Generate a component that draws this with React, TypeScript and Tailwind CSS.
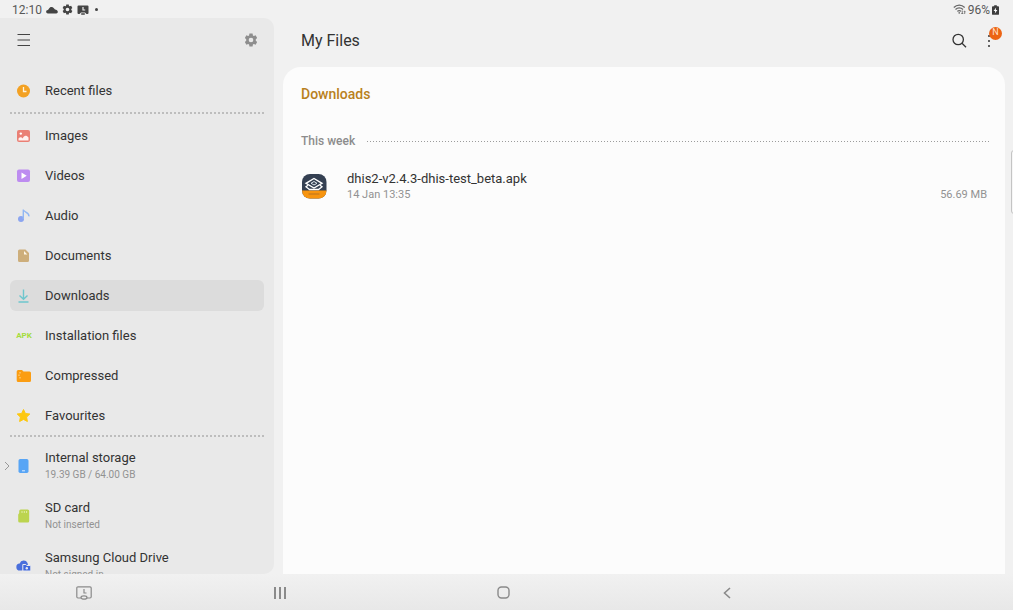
import React from "react";

const rule =
  "h-px bg-[repeating-linear-gradient(90deg,#9c9c9c_0px,#9c9c9c_1px,transparent_1px,transparent_3px)]";

const softRule =
  "h-0.5 bg-[repeating-linear-gradient(90deg,#bdbdbd_0px,#bdbdbd_2px,transparent_2px,transparent_4px)]";

function GearIcon({ className }: { className: string }) {
  return (
    <svg viewBox="0 0 24 24" className={className} fill="currentColor" aria-hidden="true">
      <path
        fillRule="evenodd"
        d="M9.3 1h5.4l.6 3.1 1.6 1 3-1.1 2.7 4.7-2.4 2.1v2.4l2.4 2.1-2.7 4.7-3-1.1-1.6 1-.6 3.1H9.3l-.6-3.1-1.6-1-3 1.1-2.7-4.7 2.4-2.1v-2.4L1.4 8.7 4.1 4l3 1.1 1.6-1L9.3 1ZM12 8a4 4 0 1 0 0 8 4 4 0 0 0 0-8Z"
      />
    </svg>
  );
}

const icons: Record<string, React.ReactNode> = {
  recent: (
    <>
      <circle cx="7.500" cy="8" r="6.500" fill="#f3a123" />
      <path d="M7.500 4V8.500H10.500" fill="none" stroke="#fff3dc" strokeWidth="1.300" />
    </>
  ),
  images: (
    <>
      <rect x="1" y="2" width="13" height="12" rx="2" fill="#ea7f74" />
      <circle cx="4.800" cy="5.600" r="1.200" fill="#fff" />
      <path d="M2.500 12.500V10.600C4 8.600 5.500 9 6.700 10.500 8 7 10.500 7 12.500 9.500v3Z" fill="#fff1ef" />
    </>
  ),
  videos: (
    <>
      <rect x="1" y="1.500" width="13" height="12.500" rx="2" fill="#bd8cf0" />
      <path d="M5.500 4.400v6.600L10.700 7.700Z" fill="#fff" />
    </>
  ),
  audio: (
    <>
      <circle cx="5" cy="11" r="3" fill="#8ca5f0" />
      <path d="M7.300 11V1.500c.3 3 6.200 2.200 5.600 6.800" fill="none" stroke="#91b7f3" strokeWidth="1.400" />
    </>
  ),
  documents: (
    <>
      <path d="M3.500 1.500h6L13 5v7.500a1.500 1.500 0 0 1-1.500 1.500h-8A1.500 1.500 0 0 1 2 12.500V3A1.500 1.500 0 0 1 3.500 1.500Z" fill="#cdae7b" />
      <path d="M8 3v3.400h3.300Z" fill="#fff8e9" />
    </>
  ),
  downloads: (
    <path d="M7.500 1.500V11M3.500 7.500 7.500 11.300 11.500 7.500M2.500 14h10" fill="none" stroke="#6dc6cd" strokeWidth="1.400" />
  ),
  compressed: (
    <>
      <path d="M2.200 2H6l1.500 1.500h6A1.500 1.500 0 0 1 15 5v7.500a1.500 1.500 0 0 1-1.500 1.500H2.200A1.500 1.500 0 0 1 .7 12.500v-9A1.500 1.500 0 0 1 2.200 2Z" fill="#fb9d12" />
      <path d="M4 4v1.500M3 6.500V8M4 9v1.500" stroke="#ffd48a" strokeWidth="1.100" />
    </>
  ),
  favourites: (
    <path d="m7.500 1.500 1.900 4 4.400.500-3.200 3.100.8 4.400-3.900-2.100-3.900 2.100.8-4.400L1.200 6l4.400-.5Z" fill="#fdc80f" stroke="#fdc80f" strokeWidth="1" strokeLinejoin="round" />
  ),
  internal: (
    <>
      <rect x="2.500" y="1" width="10" height="14" rx="1.700" fill="#58a5f5" />
      <path d="M6 12.800h3" stroke="#d9ecff" strokeWidth="1" />
    </>
  ),
  sd: (
    <>
      <path d="M4.700 1.500h7A1.500 1.500 0 0 1 13.200 3v10a1.500 1.500 0 0 1-1.500 1.500h-8A1.500 1.500 0 0 1 2.200 13V6.500L3.200 5V3A1.500 1.500 0 0 1 4.700 1.500Z" fill="#bcd44f" />
      <path d="M6 3v2M8.300 3v2M10.600 3v2" stroke="#e0eca5" strokeWidth="1" />
    </>
  ),
  cloud: (
    <>
      <path d="M4 12.500a3.500 3.500 0 0 1-.3-7A4.200 4.200 0 0 1 11.500 5l.5 2h2.500v5.500Z" fill="#4a6fdc" />
      <path d="M6.800 6.500h3l1 1h4V13h-8Z" fill="#4169dd" stroke="#e9eaf0" strokeWidth="1" />
      <circle cx="10.800" cy="10.200" r="1.200" fill="#e9eaf0" />
    </>
  ),
};

function ItemIcon({ name }: { name: string }) {
  if (name === "apk") {
    return <span aria-hidden="true" className="flex w-4 justify-center text-[8px] font-bold text-[#a4dc3c]">APK</span>;
  }
  return (
    <svg viewBox="0 0 16 16" className="size-4 shrink-0" aria-hidden="true">
      {icons[name]}
    </svg>
  );
}

const categories = [
  ["images", "Images"],
  ["videos", "Videos"],
  ["audio", "Audio"],
  ["documents", "Documents"],
  ["downloads", "Downloads"],
  ["apk", "Installation files"],
  ["compressed", "Compressed"],
  ["favourites", "Favourites"],
];

const storages = [
  ["internal", "Internal storage", "19.39 GB / 64.00 GB"],
  ["sd", "SD card", "Not inserted"],
  ["cloud", "Samsung Cloud Drive", "Not signed in"],
];

function NavItem({ icon, label, active = false }: { icon: string; label: string; active?: boolean }) {
  return (
    <a
      href="#"
      aria-current={active ? "page" : undefined}
      className={
        active
          ? "flex h-[31px] items-center gap-3 rounded-md bg-[#dcdcdc] px-1.5"
          : "flex h-[31px] items-center gap-3 rounded-md px-1.5"
      }
    >
      <ItemIcon name={icon} />
      <span className="pl-px">{label}</span>
    </a>
  );
}

function StatusBar() {
  return (
    <div className="flex h-[18px] shrink-0 items-center justify-between pt-px pl-3 pr-3.5 text-xs text-[#585858]">
      <div className="flex items-center gap-1">
        <span>12:10</span>
        <svg viewBox="0 0 12 8" className="h-2 w-3" fill="#444" aria-hidden="true">
          <path d="M2 7.500a1.800 1.800 0 0 1-.2-3.600C2.800 3.800 3 1 5.500 1c2 0 2.500 1.800 3.500 2.500 1.500.2 2.800 1 2.800 2.300 0 1-.6 1.700-1.500 1.700Z" />
        </svg>
        <GearIcon className="size-[11px] text-[#444]" />
        <svg viewBox="0 0 12 12" className="size-3" aria-hidden="true">
          <path d="M1.500 1.500h9a1 1 0 0 1 1 1V9a1 1 0 0 1-1 1H9.500L8 8.500H4L2.500 10h-1a1 1 0 0 1-1-1V2.500a1 1 0 0 1 1-1Z" fill="#444" />
          <path d="M6 3v3h2.200" fill="none" stroke="#eee" strokeWidth="1.200" />
          <rect x="4" y="9.300" width="4" height="1.500" rx=".7" fill="#444" />
        </svg>
        <span className="ml-0.5 size-[3px] rounded-full bg-[#444]" />
      </div>
      <div className="flex items-center gap-0.5">
        <svg viewBox="0 0 13 11" className="h-[11px] w-[13px]" fill="none" stroke="#666" aria-hidden="true">
          <path d="M.8 3.500C4 .3 8.500.3 11.700 3.500M2.500 5.500c2.200-2.200 5.300-2.200 7.500 0M4.300 7.400c1.200-1.100 2.700-1.100 3.900 0" strokeWidth="1.200" />
          <circle cx="6.200" cy="8.900" r=".8" fill="#666" stroke="none" />
          <path d="M9.300 6.500v3.500M8.300 9l1 1 1-1M11.700 10V7M10.900 7.800l.8-.8.8.8" strokeWidth=".8" />
        </svg>
        <span className="flex items-center">
          96%
          <svg viewBox="0 0 8 11" className="ml-0.5 h-[10px] w-[7px]" aria-hidden="true">
            <path d="M2.500 0h3v1.200H7a1 1 0 0 1 1 1V10a1 1 0 0 1-1 1H1a1 1 0 0 1-1-1V2.200a1 1 0 0 1 1-1h1.500Z" fill="#3d3d3d" />
            <path d="M4.700 2.700 1.800 6.600h1.800L3.200 9.500 6.200 5.600H4.400Z" fill="#fff" />
          </svg>
        </span>
      </div>
    </div>
  );
}

function Sidebar() {
  return (
    <aside className="w-[274px] shrink-0 overflow-hidden rounded-r-[10px] bg-[#e9e9e9] text-[13px] text-[#333]">
      <div className="flex h-11 items-center justify-between px-4">
        <button type="button" aria-label="Menu">
          <svg viewBox="0 0 16 16" className="size-4" stroke="#444" strokeWidth="1.200" aria-hidden="true">
            <path d="M1.500 2.500h12.500M1.500 8h12.500M1.500 13.500h12.500" />
          </svg>
        </button>
        <button type="button" aria-label="Settings">
          <GearIcon className="size-3.5 text-[#8e8e8e]" />
        </button>
      </div>
      <nav className="px-2.5 pt-[13px]">
        <NavItem icon="recent" label="Recent files" />
        <div className={`mt-1.5 ${softRule}`} />
        <div className="mt-1.5 flex flex-col gap-[9px]">
          {categories.map(([icon, label]) => (
            <NavItem key={icon} icon={icon} label={label} active={icon === "downloads"} />
          ))}
        </div>
        <div className={`mt-1 ${softRule}`} />
        <div className="mt-3 flex flex-col gap-[17px]">
          {storages.map(([icon, label, detail]) => (
            <a key={icon} href="#" className="relative flex items-center gap-3 px-1.5">
              {icon === "internal" && (
                <svg viewBox="0 0 6 10" className="absolute -left-1.5 h-2.5 w-1.5" fill="none" stroke="#999" aria-hidden="true">
                  <path d="m1 1 4 4-4 4" />
                </svg>
              )}
              <ItemIcon name={icon} />
              <span className="flex flex-col pl-px">
                <span className="leading-[18px]">{label}</span>
                <span className="text-[10px] leading-[15px] text-[#929292]">{detail}</span>
              </span>
            </a>
          ))}
        </div>
      </nav>
    </aside>
  );
}

function FileRow() {
  return (
    <a href="#" className="flex items-center">
      <svg viewBox="0 0 26 26" className="size-[26px] shrink-0" aria-hidden="true">
        <clipPath id="app-shape">
          <rect x="1" y="1" width="24.500" height="24.500" rx="8" />
        </clipPath>
        <g clipPath="url(#app-shape)">
          <path d="M0 0h26v26H0Z" fill="#344052" />
          <path d="M0 17.500h26V26H0Z" fill="#f7940f" />
          <path d="M13 5.500 21 10.300 13 15 5 10.300Z" fill="none" stroke="#fff" strokeWidth="1.400" />
          <path d="M13 8.500 16 10.300 13 12 10 10.300Z" fill="none" stroke="#dce4ea" strokeWidth="1" />
          <path d="m7 12.300-2 1.500 3.500 2.700h9l3.500-2.700-2-1.500" fill="none" stroke="#fff" strokeWidth="1.300" />
          <path d="M7.500 21h11" stroke="#b87320" strokeWidth="1.200" />
        </g>
      </svg>
      <span className="ml-5 flex flex-1 flex-col">
        <span className="text-[13px] leading-[18px] text-[#333]">dhis2-v2.4.3-dhis-test_beta.apk</span>
        <span className="flex justify-between text-[11px] leading-[14px] text-[#929292]">
          <span>14 Jan 13:35</span>
          <span>56.69 MB</span>
        </span>
      </span>
    </a>
  );
}

export default function App() {
  return (
    <div className="relative flex h-screen flex-col overflow-hidden bg-[#f1f1f1] font-['Roboto',sans-serif]">
      <StatusBar />
      <div className="flex min-h-0 flex-1 gap-[9px]">
        <Sidebar />
        <main className="flex min-w-0 flex-1 flex-col pr-2">
          <header className="flex h-[49px] shrink-0 items-center justify-between pb-1 pl-[18px] pr-2.5">
            <h1 className="text-base text-[#333]">My Files</h1>
            <div className="flex items-center gap-4">
              <button type="button" aria-label="Search">
                <svg viewBox="0 0 16 16" className="size-4" fill="none" stroke="#333" strokeWidth="1.300" aria-hidden="true">
                  <circle cx="7.200" cy="6.500" r="5.200" />
                  <path d="m11 10.300 4 4" />
                </svg>
              </button>
              <button type="button" aria-label="More options" className="relative flex w-3 flex-col items-center gap-[3px]">
                <span className="size-0.5 rounded-full bg-[#333]" />
                <span className="size-0.5 rounded-full bg-[#333]" />
                <span className="size-0.5 rounded-full bg-[#333]" />
                <span className="absolute -top-2 left-1.5 flex size-[13px] items-center justify-center rounded-full bg-[#ec6414] text-[9px] text-[#ffe3cf]">
                  N
                </span>
              </button>
            </div>
          </header>
          <section className="flex-1 rounded-t-[18px] bg-[#fcfcfc] px-[18px] pt-[18px]">
            <h2 className="text-sm leading-[18px] font-medium text-[#b9811c]">Downloads</h2>
            <div className="mt-[30px] flex items-center gap-3">
              <h3 className="text-xs font-medium text-[#8c8c8c]">This week</h3>
              <div className={`-mr-1 flex-1 ${rule}`} />
            </div>
            <div className="mt-[21px]">
              <FileRow />
            </div>
          </section>
        </main>
      </div>
      <footer className="grid h-9 shrink-0 grid-cols-[3fr_4fr_4fr_4fr_3fr] bg-linear-to-b from-[#f1f1f1] to-[#e8e8e8] pt-px pr-1.5 text-[#8a8a8a]">
        <button type="button" aria-label="Screen capture" className="flex items-center justify-center">
          <svg viewBox="0 0 16 14" className="h-3.5 w-4" fill="none" stroke="currentColor" strokeWidth="1.200" aria-hidden="true">
            <path d="M5 12H2A1.200 1.200 0 0 1 .8 10.800V2A1.200 1.200 0 0 1 2 .8h12A1.200 1.200 0 0 1 15.200 2v8.800A1.200 1.200 0 0 1 14 12h-3M8 3v4h2.500" />
            <ellipse cx="8" cy="11.500" rx="3" ry="1.700" />
          </svg>
        </button>
        <button type="button" aria-label="Recent apps" className="flex items-center justify-center gap-[3px]">
          <span className="h-3 w-0.5 bg-[#8a8a8a]" />
          <span className="h-3 w-0.5 bg-[#8a8a8a]" />
          <span className="h-3 w-0.5 bg-[#8a8a8a]" />
        </button>
        <button type="button" aria-label="Home" className="flex items-center justify-center">
          <svg viewBox="0 0 13 13" className="size-[13px]" fill="none" stroke="currentColor" strokeWidth="1.400" aria-hidden="true">
            <rect x="1" y="1" width="11" height="11" rx="3.500" />
          </svg>
        </button>
        <button type="button" aria-label="Back" className="flex items-center justify-center">
          <svg viewBox="0 0 8 12" className="h-3 w-2" fill="none" stroke="currentColor" strokeWidth="1.600" aria-hidden="true">
            <path d="M7 1 1.500 6 7 11" />
          </svg>
        </button>
      </footer>
      <div className="absolute top-[150px] -right-1 h-16 w-1.5 rounded-sm border border-[#c4c4c4] bg-[#f6f6f6]" />
    </div>
  );
}
